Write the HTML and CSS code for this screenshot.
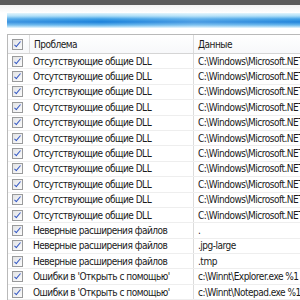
FILE: index.html
```html
<!DOCTYPE html>
<html lang="ru">
<head>
  <meta charset="UTF-8">
  <title>Проблемы реестра</title>
  <link rel="stylesheet" href="styles.css">
</head>
<body>
  <div class="titlebar"></div>
  <div class="window">
    <div class="banner"></div>
    <div class="grid">
      <div class="row head">
        <div class="cell check"><span class="box"></span></div>
        <div class="cell name">Проблема</div>
        <div class="cell data">Данные</div>
      </div>
      <div class="row"><div class="cell check"><span class="box"></span></div><div class="cell name">Отсутствующие общие DLL</div><div class="cell data">C:\Windows\Microsoft.NET\Framework</div></div>
      <div class="row"><div class="cell check"><span class="box"></span></div><div class="cell name">Отсутствующие общие DLL</div><div class="cell data">C:\Windows\Microsoft.NET\Framework</div></div>
      <div class="row"><div class="cell check"><span class="box"></span></div><div class="cell name">Отсутствующие общие DLL</div><div class="cell data">C:\Windows\Microsoft.NET\Framework</div></div>
      <div class="row"><div class="cell check"><span class="box"></span></div><div class="cell name">Отсутствующие общие DLL</div><div class="cell data">C:\Windows\Microsoft.NET\Framework</div></div>
      <div class="row"><div class="cell check"><span class="box"></span></div><div class="cell name">Отсутствующие общие DLL</div><div class="cell data">C:\Windows\Microsoft.NET\Framework</div></div>
      <div class="row"><div class="cell check"><span class="box"></span></div><div class="cell name">Отсутствующие общие DLL</div><div class="cell data">C:\Windows\Microsoft.NET\Framework</div></div>
      <div class="row"><div class="cell check"><span class="box"></span></div><div class="cell name">Отсутствующие общие DLL</div><div class="cell data">C:\Windows\Microsoft.NET\Framework</div></div>
      <div class="row"><div class="cell check"><span class="box"></span></div><div class="cell name">Отсутствующие общие DLL</div><div class="cell data">C:\Windows\Microsoft.NET\Framework</div></div>
      <div class="row"><div class="cell check"><span class="box"></span></div><div class="cell name">Отсутствующие общие DLL</div><div class="cell data">C:\Windows\Microsoft.NET\Framework</div></div>
      <div class="row"><div class="cell check"><span class="box"></span></div><div class="cell name">Отсутствующие общие DLL</div><div class="cell data">C:\Windows\Microsoft.NET\Framework</div></div>
      <div class="row"><div class="cell check"><span class="box"></span></div><div class="cell name">Отсутствующие общие DLL</div><div class="cell data">C:\Windows\Microsoft.NET\Framework</div></div>
      <div class="row"><div class="cell check"><span class="box"></span></div><div class="cell name">Неверные расширения файлов</div><div class="cell data">.</div></div>
      <div class="row"><div class="cell check"><span class="box"></span></div><div class="cell name">Неверные расширения файлов</div><div class="cell data">.jpg-large</div></div>
      <div class="row"><div class="cell check"><span class="box"></span></div><div class="cell name">Неверные расширения файлов</div><div class="cell data">.tmp</div></div>
      <div class="row"><div class="cell check"><span class="box"></span></div><div class="cell name">Ошибки в 'Открыть с помощью'</div><div class="cell data">c:\Winnt\Explorer.exe %1</div></div>
      <div class="row"><div class="cell check"><span class="box"></span></div><div class="cell name">Ошибки в 'Открыть с помощью'</div><div class="cell data">c:\Winnt\Notepad.exe %1</div></div>
    </div>
  </div>
</body>
</html>
```

FILE: styles.css
```css
body {
  margin: 0;
  width: 300px;
  height: 300px;
  overflow: hidden;
  background: #ffffff;
  font-family: 'DejaVu Sans Condensed', 'Liberation Sans', sans-serif;
  font-size: 10px;
  letter-spacing: -0.5px;
  color: #1a1a1a;
}
.titlebar {
  height: 5px;
  background: #5a5a5a;
}
.window {
  background: linear-gradient(to bottom, #f1f1f1 0, #ffffff 8px);
  padding: 8px 0 0 7px;
}
.banner {
  height: 15px;
  margin-right: -20px;
  background:
    linear-gradient(to right, rgba(255,255,255,0.15), rgba(255,255,255,0) 30%, rgba(255,255,255,0.2) 60%, rgba(255,255,255,0)),
    linear-gradient(to bottom, #dff4fd 0, #a8dcf7 20%, #3a9ee6 40%, #1b80da 60%, #5fb3ec 80%, #e8f6fd 100%);
}
.grid {
  margin-top: 6px;
  border-left: 1px solid #b9b9b9;
  border-top: 1px solid #b9b9b9;
  width: 292px;
  overflow: hidden;
}
.row {
  display: grid;
  grid-template-columns: 21px 164px 1fr;
  height: 15.4px;
  border-bottom: 1px solid #eeeeee;
  box-sizing: border-box;
  white-space: nowrap;
}
.row.head {
  height: 19px;
  border-bottom: 1px solid #d5d5d5;
  background: linear-gradient(to bottom, #ffffff, #f7f8fa);
}
.cell {
  display: flex;
  align-items: center;
  overflow: hidden;
  min-width: 0;
}
.check {
  padding-left: 4px;
}
.name {
  padding-left: 4px;
}
.data {
  padding-left: 4px;
  border-left: 1px solid #dcdcdc;
}
.head .name {
  border-left: 1px solid #dcdcdc;
}
.box {
  position: relative;
  flex: none;
  width: 9px;
  height: 9px;
  border: 1px solid #999a9b;
  background: linear-gradient(135deg, #e2e3e5, #fbfbfb);
}
.box::after {
  content: '';
  position: absolute;
  left: 3px;
  top: 0;
  width: 2px;
  height: 6px;
  border-right: 1.5px solid #3458c4;
  border-bottom: 1.5px solid #3458c4;
  transform: rotate(40deg);
}
```
